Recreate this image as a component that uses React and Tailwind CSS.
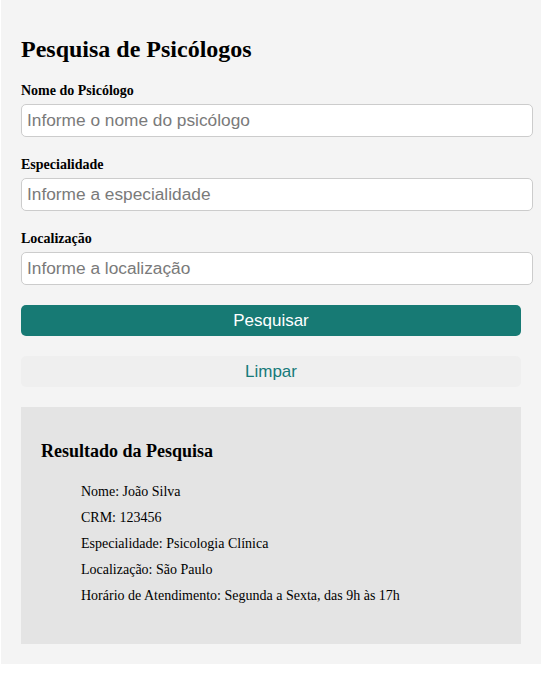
import React, { useState } from 'react';

const serif = "font-['Liberation_Serif','Times_New_Roman',serif]";
const sans = "font-['Liberation_Sans',Arial,sans-serif]";

const Campo = ({ label, placeholder, value, onChange }) => (
  <div className="mb-[20px]">
    <label className={`${serif} block text-[14px] leading-[16px] font-bold text-black mb-[5px]`}>{label}</label>
    <input
      type="text"
      value={value}
      onChange={onChange}
      placeholder={placeholder}
      className={`${sans} block w-[512px] h-[33px] px-[5px] text-[17.3px] bg-white border border-[#cccccc] rounded-[5px] text-black placeholder:text-[#7a7a7a] outline-none`}
    />
  </div>
);

const resultado = {
  nome: 'João Silva',
  crm: '123456',
  especialidade: 'Psicologia Clínica',
  localizacao: 'São Paulo',
  horario: 'Segunda a Sexta, das 9h às 17h',
};

export default function App() {
  const [nome, setNome] = useState('');
  const [especialidade, setEspecialidade] = useState('');
  const [localizacao, setLocalizacao] = useState('');

  const limpar = () => {
    setNome('');
    setEspecialidade('');
    setLocalizacao('');
  };

  return (
    <div className="min-h-[673px] bg-white">
      <div className="ml-[1px] w-[540px] bg-[#f4f4f4] p-[20px]">
        <h2 className={`${serif} text-[24px] leading-[27px] font-bold text-black mt-[16px] mb-[20px]`}>
          Pesquisa de Psicólogos
        </h2>

        <Campo label="Nome do Psicólogo" placeholder="Informe o nome do psicólogo" value={nome} onChange={(e) => setNome(e.target.value)} />
        <Campo label="Especialidade" placeholder="Informe a especialidade" value={especialidade} onChange={(e) => setEspecialidade(e.target.value)} />
        <Campo label="Localização" placeholder="Informe a localização" value={localizacao} onChange={(e) => setLocalizacao(e.target.value)} />

        <button className={`${sans} block w-full h-[31px] rounded-[5px] bg-[#177a74] text-white text-[17px]`}>
          Pesquisar
        </button>
        <button
          onClick={limpar}
          className={`${sans} block w-full h-[31px] mt-[20px] rounded-[5px] bg-[#efefef] text-[#177a7a] text-[17px]`}
        >
          Limpar
        </button>

        {/* resultado */}
        <div className="mt-[20px] bg-[#e4e4e4] px-[20px] pt-[20px] pb-[20px]">
          <h3 className={`${serif} text-[18px] leading-[21px] font-bold text-black mt-[14px] mb-[22px]`}>
            Resultado da Pesquisa
          </h3>
          <ul className={`${serif} pl-[40px] text-[14px] leading-[16px] text-black mb-[20px]`}>
            <li className="mb-[10px]">Nome: {resultado.nome}</li>
            <li className="mb-[10px]">CRM: {resultado.crm}</li>
            <li className="mb-[10px]">Especialidade: {resultado.especialidade}</li>
            <li className="mb-[10px]">Localização: {resultado.localizacao}</li>
            <li className="mb-[10px]">Horário de Atendimento: {resultado.horario}</li>
          </ul>
        </div>
      </div>
    </div>
  );
}
